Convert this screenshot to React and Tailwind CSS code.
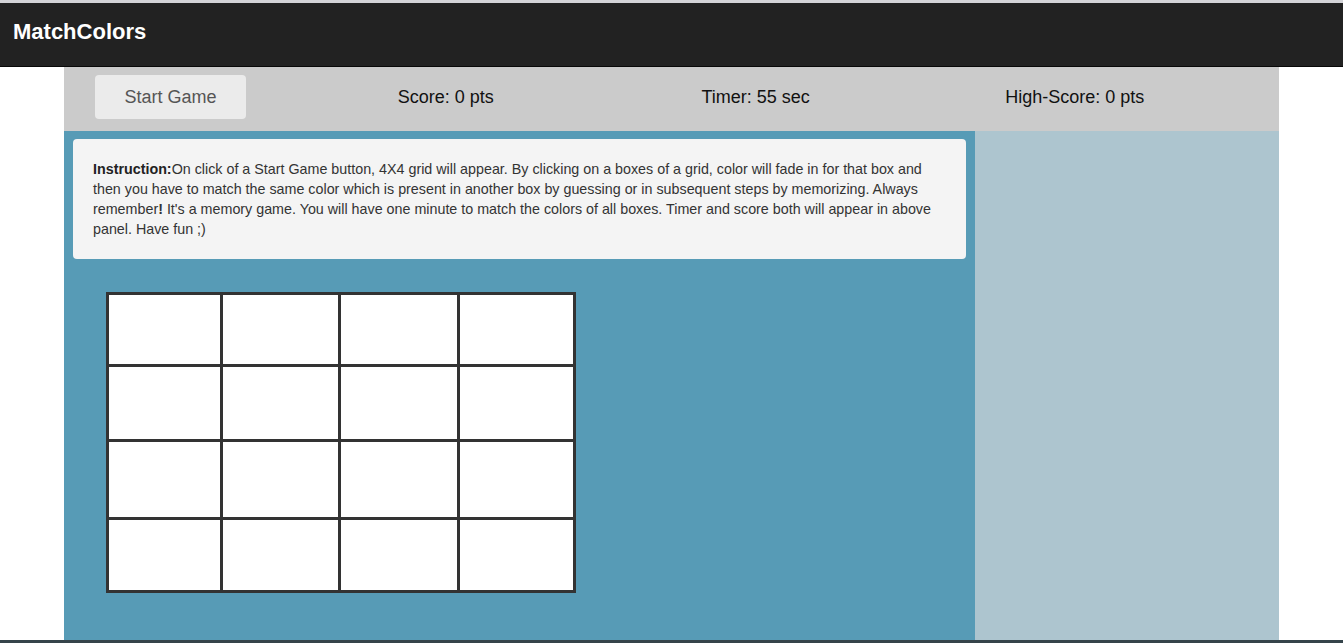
import React from 'react'

const cols = ['w-[111px]', 'w-[115px]', 'w-[116px]', 'w-[113px]']
const rows = ['h-[69px]', 'h-[72px]', 'h-[75px]', 'h-[70px]']

export default function App() {
  return (
    <div className="h-[643px] overflow-hidden bg-white font-['Liberation_Sans',Arial,sans-serif] flex flex-col">
      <div className="h-[3px] bg-[#d4d4d8]" />
      <nav className="h-[64px] shrink-0 bg-[#222222] border-b border-[#080808] flex items-center px-[13px]">
        <span className="text-white font-bold text-[22px] leading-none mb-[6px]">MatchColors</span>
      </nav>

      <div className="w-[1215px] ml-[64px] flex-1 flex flex-col">
        <div className="h-[64px] bg-[#cbcbcb] grid grid-cols-4 items-center pb-[4px]">
          <div className="pl-[31px]">
            <button className="w-[151px] h-[44px] rounded bg-[#ebebeb] text-[#555] text-[18px]">
              Start Game
            </button>
          </div>
          <div className="pl-[30px] text-[18px] text-[#111]">Score: 0 pts</div>
          <div className="pl-[30px] text-[18px] text-[#111]">Timer: 55 sec</div>
          <div className="pl-[30px] text-[18px] text-[#111]">High-Score: 0 pts</div>
        </div>

        <div className="flex-1 flex">
          <div className="w-[911px] bg-[#579bb6] pt-[8px]">
            <div className="mx-[9px] rounded bg-[#f4f4f4] pl-[20px] pr-[30px] py-[20px] text-[14.3px] leading-[20px] text-[#333]">
              <b className="text-[#222]">Instruction:</b>On click of a Start Game button, 4X4 grid will appear. By
              clicking on a boxes of a grid, color will fade in for that box and then you have to match the same
              color which is present in another box by guessing or in subsequent steps by memorizing. Always
              remember<b>!</b> It's a memory game. You will have one minute to match the colors of all boxes. Timer
              and score both will appear in above panel. Have fun ;)
            </div>

            <div className="ml-[42px] mt-[33px] inline-flex flex-col gap-[3px] border-[3px] border-[#333] bg-[#333]">
              {rows.map((r, i) => (
                <div key={i} className="flex gap-[3px]">
                  {cols.map((c, j) => (
                    <div key={j} className={`${c} ${r} bg-white`} />
                  ))}
                </div>
              ))}
            </div>
          </div>
          <div className="w-[304px] bg-[#adc5cf]" />
        </div>
      </div>
      <div className="h-[3px] shrink-0 bg-[#35444a]" />
    </div>
  )
}
